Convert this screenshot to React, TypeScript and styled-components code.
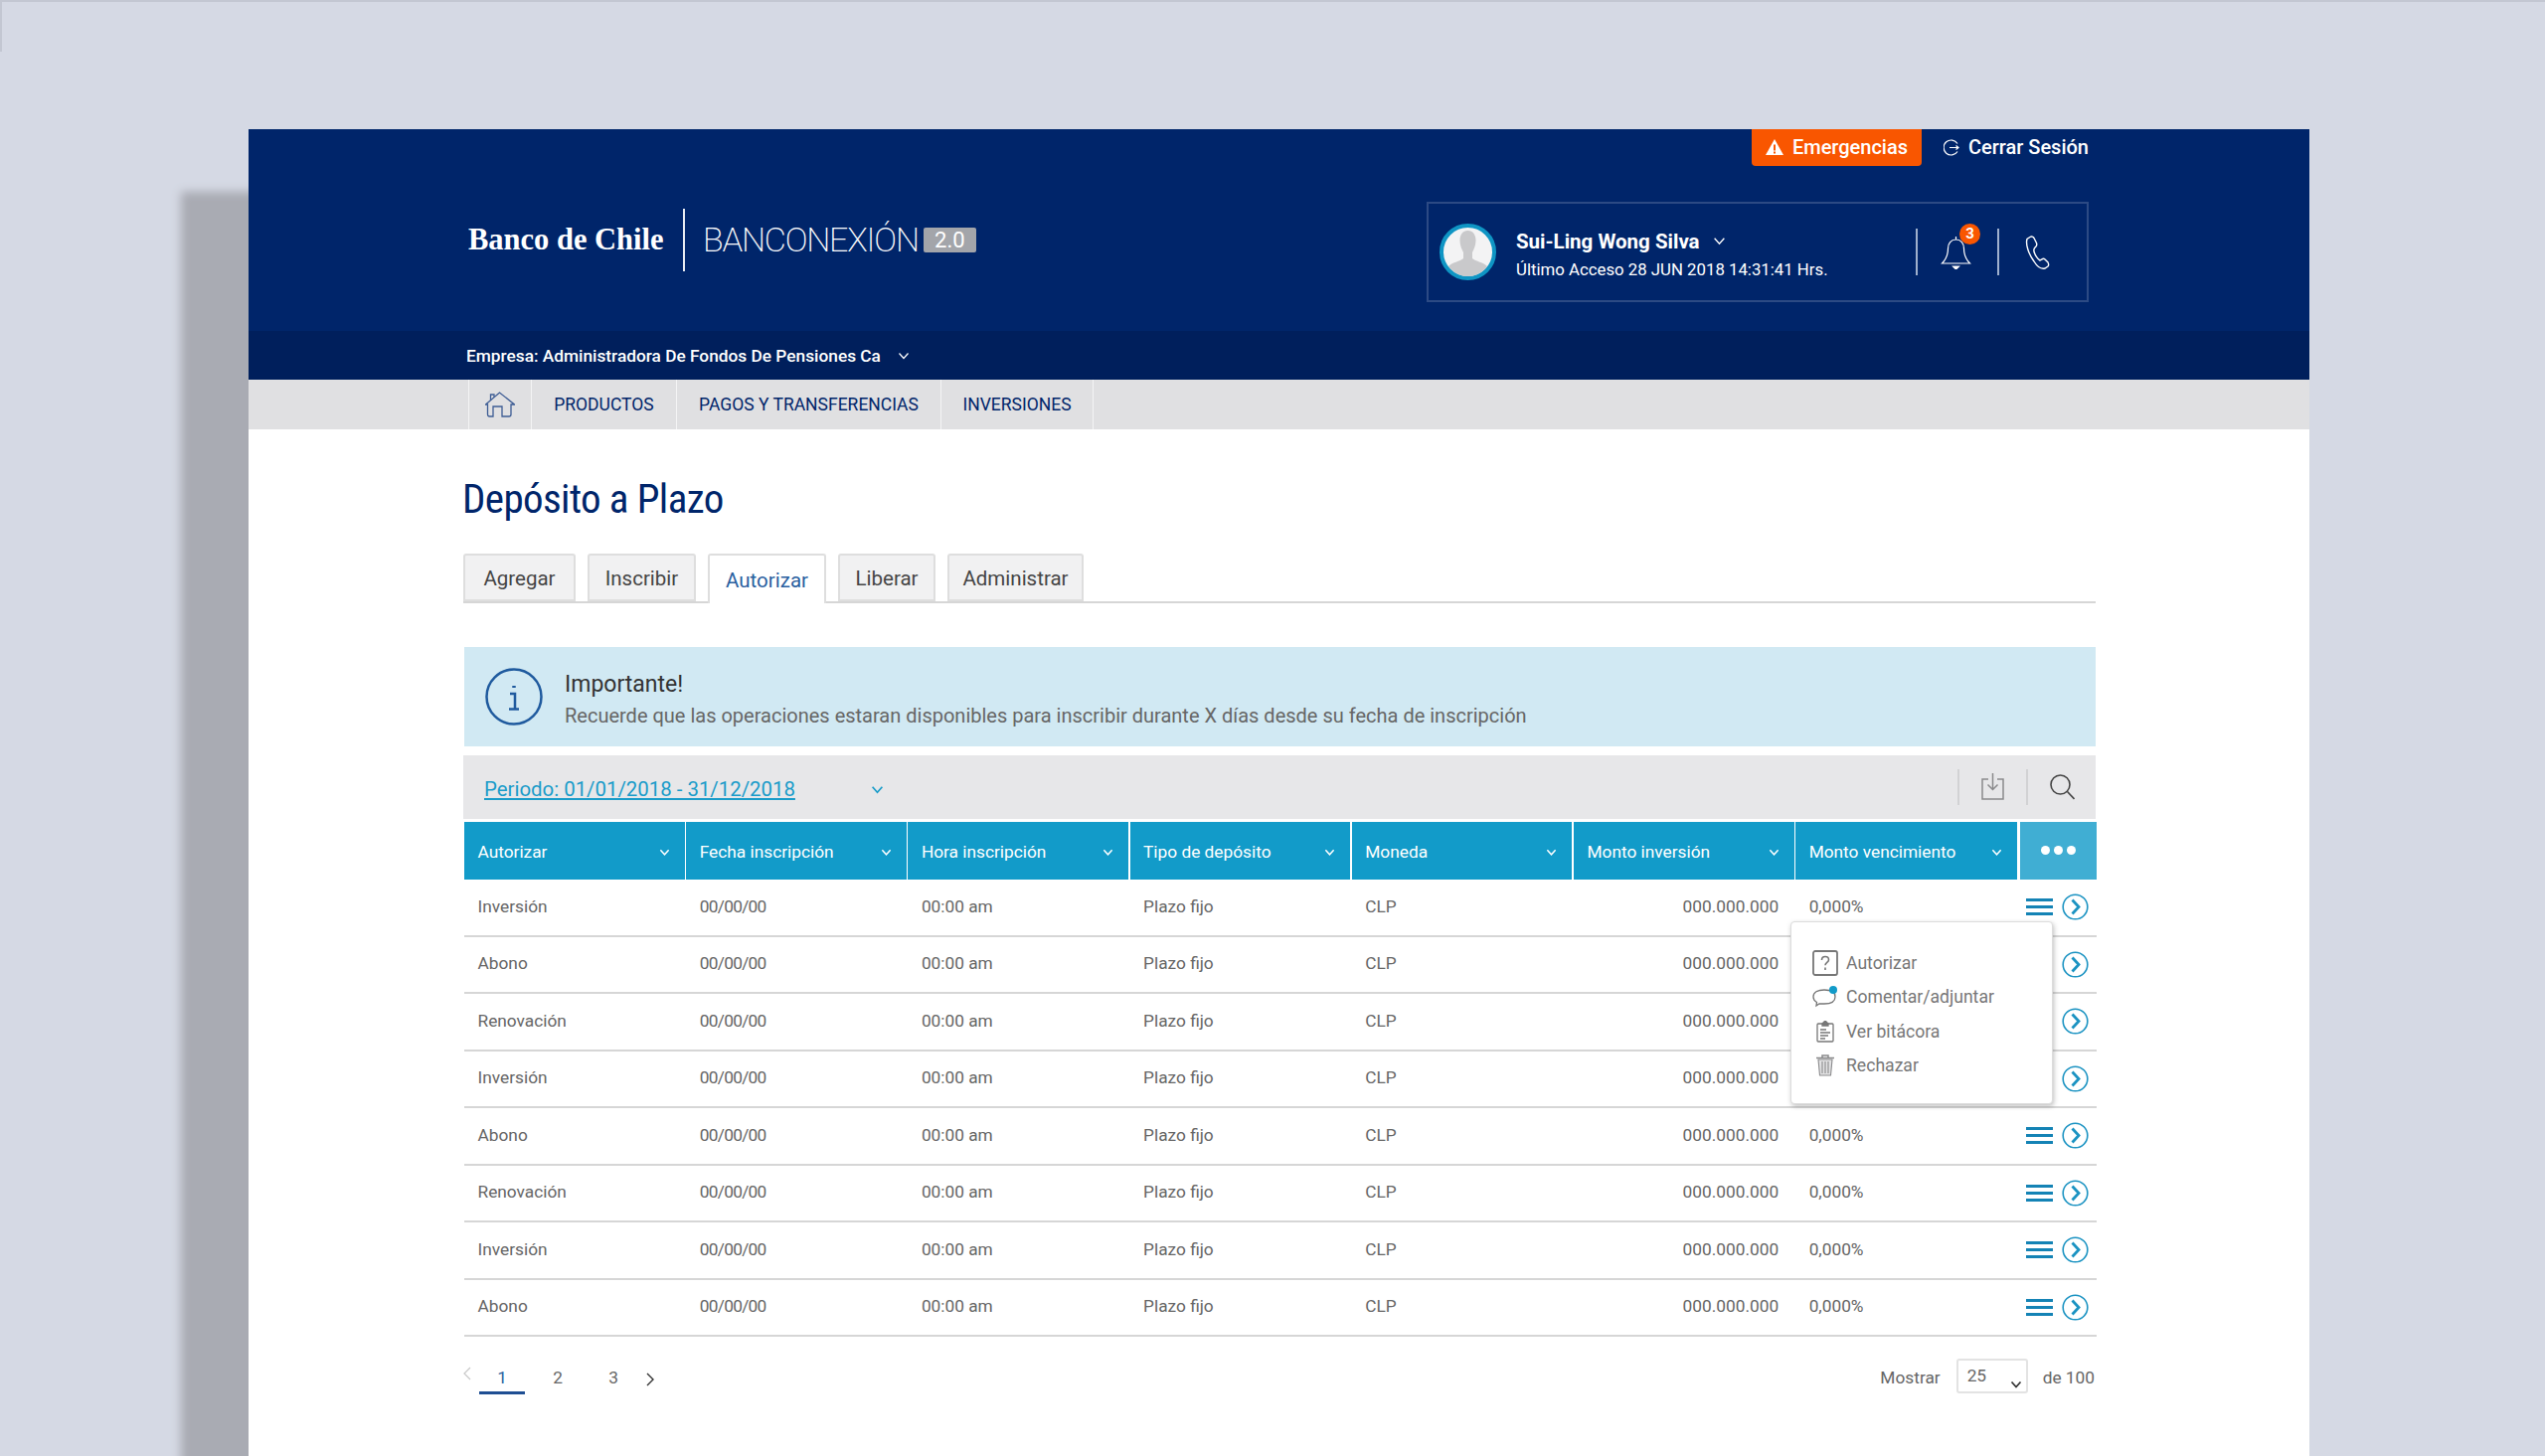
import React from 'react';
import styled, { createGlobalStyle } from 'styled-components';

const GlobalStyle = createGlobalStyle`
  html, body {
    margin: 0;
    padding: 0;
    background: #d5d9e4;
    font-family: Roboto, "Liberation Sans", sans-serif;
  }
  * { box-sizing: border-box; }
`;

const Page = styled.div`
  position: relative;
  width: 2560px;
  height: 1465px;
  overflow: hidden;
  padding: 130px 237px 0 250px;
  background: #d5d9e4;
  border-top: 2px solid #c3c7d2;

  &::before {
    content: '';
    position: absolute;
    left: 0;
    top: 0;
    width: 2px;
    height: 50px;
    background: #c3c7d2;
  }
`;

const Panel = styled.div`
  margin-top: -2px;
  height: 1400px;
  background: #fff;
  box-shadow: -68px 63px 9px 0 #a9abb3;
`;

const Header = styled.header`
  height: 203px;
  background: #00256a;
`;

const TopLinks = styled.div`
  display: flex;
  justify-content: flex-end;
  align-items: center;
  gap: 22px;
  height: 37px;
  padding-right: 222px;
`;

const EmergencyButton = styled.a`
  display: flex;
  align-items: center;
  gap: 9px;
  width: 171px;
  height: 37px;
  padding: 0 0 1px 14px;
  background: #f95600;
  border-radius: 0 0 4px 4px;
  color: #fff;
  font-size: 20px;
  font-weight: 500;
`;

const LogoutLink = styled.a`
  display: flex;
  align-items: center;
  gap: 8px;
  padding-bottom: 1px;
  color: #fff;
  font-size: 20px;
  font-weight: 500;
`;

const HeaderMain = styled.div`
  display: flex;
  justify-content: space-between;
  align-items: flex-start;
  padding: 0 222px 0 221px;
`;

const Logo = styled.div`
  display: flex;
  align-items: center;
  height: 63px;
  margin-top: 43px;
  color: #fff;
`;

const BankName = styled.span`
  width: 196px;
  font-family: "Liberation Serif", serif;
  font-size: 30.5px;
  font-weight: 700;
  white-space: nowrap;
`;

const LogoDivider = styled.span`
  width: 2px;
  height: 63px;
  margin: 0 18px 0 20px;
  background: #e8ebf2;
`;

const ProductName = styled.span`
  padding-bottom: 2px;
  font-size: 34px;
  font-weight: 200;
  letter-spacing: -1.2px;
  white-space: nowrap;
`;

const VersionBadge = styled.span`
  display: flex;
  align-items: center;
  justify-content: center;
  width: 53px;
  height: 25px;
  margin: 0 0 0 5px;
  border-radius: 2px;
  background: #a3a5aa;
  font-size: 22px;
  font-weight: 400;
`;

const UserBox = styled.div`
  display: flex;
  align-items: center;
  width: 666px;
  height: 101px;
  margin-top: 36px;
  padding: 0 37px 0 11px;
  border: 2px solid #2c4a84;
  color: #fff;
`;

const Avatar = styled.div`
  width: 57px;
  height: 57px;
  border: 4px solid #0f95c4;
  border-radius: 50%;
  overflow: hidden;
  background: #f3f3f4;
`;

const UserText = styled.div`
  display: flex;
  flex-direction: column;
  gap: 6px;
  margin: 4px 0 0 20px;
`;

const UserName = styled.div`
  display: flex;
  align-items: center;
  gap: 13px;
  font-size: 20.5px;
  font-weight: 700;
  line-height: 24px;
`;

const LastAccess = styled.div`
  font-size: 16.8px;
  line-height: 20px;
`;

const UserActions = styled.div`
  display: flex;
  align-items: center;
  gap: 26px;
  margin-left: auto;
`;

const ActionDivider = styled.span`
  width: 2px;
  height: 47px;
  background: #9fb0cd;
`;

const BellWrap = styled.div`
  position: relative;
  display: flex;
  margin-left: -3px;
`;

const BellBadge = styled.span`
  position: absolute;
  right: -9px;
  top: -12px;
  width: 21px;
  height: 21px;
  border-radius: 50%;
  background: #f95600;
  color: #fff;
  font-size: 15px;
  font-weight: 700;
  line-height: 21px;
  text-align: center;
`;

const CompanyBar = styled.div`
  display: flex;
  align-items: center;
  gap: 17px;
  height: 49px;
  padding-left: 219px;
  background: #001f5c;
  color: #fff;
  font-size: 17.3px;
  font-weight: 500;
`;

const Nav = styled.nav`
  display: flex;
  height: 50px;
  padding-left: 221px;
  background: #e0e0e2;
`;

const NavItem = styled.a<{ $width: number }>`
  display: flex;
  align-items: center;
  justify-content: center;
  width: ${(p) => p.$width}px;
  border-left: 1px solid #f4f4f5;
  color: #00256a;
  font-size: 17.5px;
  font-weight: 400;

  &:last-child {
    border-right: 1px solid #f4f4f5;
  }
`;

const Content = styled.main`
  width: 1858px;
  padding: 46px 0 0 216px;
`;

const Title = styled.h1`
  margin: 0 0 31px -1px;
  color: #00256a;
  font-size: 41px;
  font-weight: 400;
  line-height: 48px;
  font-stretch: 75%;
  letter-spacing: -0.6px;
`;

const Tabs = styled.div`
  display: flex;
  gap: 12px;
  height: 50px;
  border-bottom: 2px solid #d6d6d6;
`;

const Tab = styled.a<{ $width: number; $active?: boolean }>`
  display: flex;
  align-items: center;
  justify-content: center;
  width: ${(p) => p.$width}px;
  height: ${(p) => (p.$active ? 50 : 48)}px;
  padding-top: ${(p) => (p.$active ? 2 : 1)}px;
  border: 2px solid #dedede;
  border-bottom-width: ${(p) => (p.$active ? 0 : 2)}px;
  border-radius: 3px 3px 0 0;
  background: ${(p) => (p.$active ? '#fff' : '#f1f1f2')};
  color: ${(p) => (p.$active ? '#2a5f9f' : '#454545')};
  font-size: 20.5px;
`;

const InfoBar = styled.div`
  display: flex;
  align-items: center;
  gap: 22px;
  height: 100px;
  margin: 44px 0 0 1px;
  padding-left: 21px;
  background: #d1e9f3;
`;

const InfoIconBox = styled.span`
  display: flex;
  margin-top: -1px;
`;

const InfoBody = styled.div`
  padding-top: 4px;
`;

const InfoTitle = styled.div`
  color: #333;
  font-size: 23px;
  line-height: 28px;
`;

const InfoText = styled.div`
  margin-top: 5px;
  color: #666;
  font-size: 20px;
  line-height: 24px;
`;

const Toolbar = styled.div`
  display: flex;
  align-items: center;
  gap: 22px;
  height: 64px;
  margin-top: 9px;
  padding: 0 21px;
  background: #e7e7e9;
`;

const PeriodLink = styled.a`
  display: flex;
  align-items: center;
  gap: 76px;
  margin-right: auto;
  padding-top: 4px;
  color: #1a9cc9;
  font-size: 20.4px;
`;

const PeriodText = styled.span`
  text-decoration: underline;
`;

const ToolDivider = styled.span`
  width: 2px;
  height: 36px;
  background: #d2d2d4;
`;

const ToolIcon = styled.span`
  display: flex;
  margin-top: -1px;
`;

const Table = styled.div`
  position: relative;
  margin: 3px -1px 0 1px;
`;

const columns = 'repeat(6, 223.2px) 224px 79px';

const HeadRow = styled.div`
  display: grid;
  grid-template-columns: ${columns};
  height: 58px;
`;

const HeadCell = styled.div`
  display: flex;
  align-items: center;
  justify-content: space-between;
  margin-right: 1.5px;
  padding: 2px 15px 0 13.5px;
  background: #129bc9;
  color: #fff;
  font-size: 17.3px;
`;

const MoreCell = styled.div`
  display: flex;
  align-items: center;
  justify-content: center;
  gap: 4px;
  margin-left: 2px;
  padding-bottom: 2px;
  background: #40aed3;
`;

const Dot = styled.span`
  width: 9px;
  height: 9px;
  border-radius: 50%;
  background: #fff;
`;

const Row = styled.div`
  display: grid;
  grid-template-columns: ${columns};
  align-items: center;
  height: 57.5px;
  border-bottom: 2px solid #d6d6d6;
  color: #666;
  font-size: 17.3px;
`;

const Cell = styled.div<{ $right?: boolean; $tight?: boolean }>`
  padding: 0 ${(p) => (p.$right ? 17 : 14)}px 2px 13.5px;
  text-align: ${(p) => (p.$right ? 'right' : 'left')};
  letter-spacing: ${(p) => (p.$tight ? '-0.7px' : 'normal')};
`;

const RowActions = styled.div`
  display: flex;
  align-items: center;
  gap: 9px;
  padding-left: 8px;
`;

const Burger = styled.span`
  display: flex;
  flex-direction: column;
  gap: 4px;
  width: 27px;
`;

const BurgerLine = styled.span`
  height: 3px;
  background: #1483b5;
`;

const ActionMenu = styled.div`
  position: absolute;
  left: 1334px;
  top: 100px;
  display: flex;
  flex-direction: column;
  justify-content: center;
  width: 264px;
  height: 184px;
  padding: 3px 0 0 20px;
  background: #fff;
  border: 1px solid #dcdcdc;
  border-radius: 4px;
  box-shadow: 1px 2px 5px rgba(0, 0, 0, 0.25);
  color: #777;
  font-size: 17.6px;
`;

const MenuItem = styled.div`
  display: flex;
  align-items: center;
  height: 34.5px;
`;

const MenuIcon = styled.span`
  display: flex;
  justify-content: center;
  width: 28px;
  margin-right: 7px;
`;

const Footer = styled.div`
  display: flex;
  justify-content: space-between;
  align-items: center;
  margin-top: 21px;
  color: #666;
  font-size: 17.3px;
`;

const Pager = styled.div`
  display: flex;
  align-items: flex-start;
  height: 37px;
`;

const PagerArrow = styled.span<{ $top: number; $left: number }>`
  display: flex;
  margin: ${(p) => p.$top}px 0 0 ${(p) => p.$left}px;
`;

const PageNumber = styled.a<{ $active?: boolean }>`
  display: flex;
  justify-content: center;
  width: 46px;
  height: 37px;
  margin-right: 10px;
  padding-top: 10px;
  border-bottom: 3px solid ${(p) => (p.$active ? '#1e4e93' : 'transparent')};
  color: ${(p) => (p.$active ? '#2a5f9f' : '#666')};
`;

const PageSize = styled.div`
  display: flex;
  align-items: center;
  gap: 16px;
  margin-right: 1px;
  padding-top: 2px;
`;

const SizeSelect = styled.div`
  display: flex;
  justify-content: space-between;
  width: 72px;
  height: 35px;
  margin: -2px -1px 0 0;
  padding: 0 4px 0 9px;
  border: 2px solid #e3e3e3;
  border-radius: 3px;
  line-height: 30px;
`;

const SizeArrow = styled.span`
  display: flex;
  align-self: flex-end;
  margin-bottom: 1px;
`;

const Chevron = ({ size = 12, color = '#fff', width = 1.5 }: { size?: number; color?: string; width?: number }) => (
  <svg width={size} height={size} viewBox="0 0 12 12" fill="none" stroke={color} strokeWidth={width}>
    <path d="M1.5 3.5 6 8.5l4.5-5" />
  </svg>
);

const HomeIcon = () => (
  <svg width="30" height="26" viewBox="0 0 30 26" fill="none" stroke="#3d5c94" strokeWidth="1.3">
    <path d="M.5 13 14.500 1 29.500 13H26v10q0 2-2 2h-7V15H8v10H4.500q-2 0-2-2V13z" />
    <path d="M5.500 8.500V3H9v2.500" />
  </svg>
);

const WarningIcon = () => (
  <svg width="18" height="16" viewBox="0 0 18 16">
    <path d="M9 0 18 16H0z" fill="#fff" />
    <path d="M8 5.500h2v6H8zM8 12.500h2v2H8z" fill="#f95600" />
  </svg>
);

const LogoutIcon = () => (
  <svg width="17" height="17" viewBox="0 0 17 17" fill="none" stroke="#fff" strokeWidth="1.2">
    <path d="M14 4.500A7.500 7.500 0 1 0 14 12.500" />
    <path d="M6 8.500h9M12.500 6.500l2.500 2-2.500 2" />
  </svg>
);

const AvatarFigure = () => (
  <svg width="49" height="49" viewBox="0 0 49 49">
    <path d="M24.500 3c5 0 8 4 8 10 0 5-2 9-3.500 12v6c3 3 12 4 15 8l2 10H3l2-10c3-4 12-5 15-8v-6c-1.500-3-3.500-7-3.500-12 0-6 3-10 8-10z" fill="#c9c9cb" />
  </svg>
);

const BellIcon = () => (
  <svg width="31" height="34" viewBox="0 0 31 34" fill="none" stroke="#fff" strokeWidth="1.2">
    <path d="M15.500 1v3M15.500 4c-5 0-8 4-8 9 0 8-3 12-6 15h28c-3-3-6-7-6-15 0-5-3-9-8-9z" />
    <path d="M12.500 31h6l-3 3z" fill="#fff" />
  </svg>
);

const PhoneIcon = () => (
  <svg width="25" height="34" viewBox="0 0 25 34" fill="none" stroke="#fff" strokeWidth="1.4">
    <path d="M5 1.500 2 3.500C.500 8 3 18 9 26c3 5 7 8 11 7l3-2c1-1 1-2 0-4l-3-3c-1-1-2-1-3 0l-2 1c-2-1-5-5-6-9-.5-2 0-3 1-4l1-1c1-1 1-2 .5-3.500L9 2.500C8 1 6.500 .500 5 1.500z" />
  </svg>
);

const InfoIcon = () => (
  <svg width="58" height="58" viewBox="0 0 58 58" fill="none" stroke="#1f5a9e">
    <circle cx="29" cy="29" r="27.500" strokeWidth="2.500" />
    <path d="M29 18v2" strokeWidth="3.500" />
    <path d="M25 26h5v15M24 41.500h10" strokeWidth="2.500" />
  </svg>
);

const DownloadIcon = () => (
  <svg width="23" height="27" viewBox="0 0 23 27" fill="none" stroke="#8a8a8c" strokeWidth="1.500">
    <path d="M7 6H1v20h21V6h-6" />
    <path d="M11.500 0v16M6.500 11.500l5 5 5-5" />
  </svg>
);

const SearchIcon = () => (
  <svg width="25" height="26" viewBox="0 0 25 26" fill="none" stroke="#444" strokeWidth="1.600">
    <circle cx="10.500" cy="10.500" r="9.500" />
    <path d="M17.500 17.500 24.500 25" />
  </svg>
);

const CircleArrow = () => (
  <svg width="27" height="27" viewBox="0 0 27 27" fill="none" stroke="#1b93c2">
    <circle cx="13.500" cy="13.500" r="12.300" strokeWidth="1.600" />
    <path d="M10.500 6.500 17 13.500l-6.500 7" strokeWidth="2.800" />
  </svg>
);

const QuestionIcon = () => (
  <svg width="26" height="26" viewBox="0 0 26 26" fill="none" stroke="#777" strokeWidth="1.800">
    <rect x="1" y="1" width="24" height="24" rx="2" />
    <path d="M9.500 10c0-2 1.500-3.500 3.500-3.500s3.500 1.300 3.500 3.200c0 2.600-3.500 2.800-3.500 5.500M13 17.500v2.500" strokeWidth="1.600" />
  </svg>
);

const CommentIcon = () => (
  <svg width="26" height="22" viewBox="0 0 26 22" fill="none">
    <path d="M12 4c6 0 11 2 11 7s-5 7-11 7H7l-3 2 .5-3.500C2 15 1 13 1 11c0-5 5-7 11-7z" stroke="#777" strokeWidth="1.300" />
    <circle cx="21" cy="4" r="4" fill="#129bc9" />
  </svg>
);

const ClipboardIcon = () => (
  <svg width="18" height="22" viewBox="0 0 18 22" fill="none" stroke="#777" strokeWidth="1.300">
    <rect x="1" y="3" width="16" height="18" rx="1" />
    <path d="M6 3l3-3 3 3v2H6z" fill="#777" />
    <path d="M4 9h6M4 12h10M4 15h8M4 18h5" />
  </svg>
);

const TrashIcon = () => (
  <svg width="18" height="22" viewBox="0 0 18 22" fill="none" stroke="#8a8a8c" strokeWidth="1.100">
    <path d="M0 3.500h18M6 3V1h6v2" strokeWidth="1.500" />
    <path d="M2 5l1.500 16h11L16 5z" fill="#e2e2e3" />
    <path d="M6 7v12M9 7v12M12 7v12" />
  </svg>
);

const headers = ['Autorizar', 'Fecha inscripción', 'Hora inscripción', 'Tipo de depósito', 'Moneda', 'Monto inversión', 'Monto vencimiento'];
const rows = ['Inversión', 'Abono', 'Renovación', 'Inversión', 'Abono', 'Renovación', 'Inversión', 'Abono'];
// the open menu hangs over these rows, their rate is not visible
const coveredRows = [1, 2, 3];

const App = () => (
  <Page>
    <GlobalStyle />
    <Panel>
      <Header>
        <TopLinks>
          <EmergencyButton><WarningIcon />Emergencias</EmergencyButton>
          <LogoutLink><LogoutIcon />Cerrar Sesión</LogoutLink>
        </TopLinks>
        <HeaderMain>
          <Logo>
            <BankName>Banco de Chile</BankName>
            <LogoDivider />
            <ProductName>BANCONEXIÓN</ProductName>
            <VersionBadge>2.0</VersionBadge>
          </Logo>
          <UserBox>
            <Avatar><AvatarFigure /></Avatar>
            <UserText>
              <UserName>Sui-Ling Wong Silva <Chevron size={13} width={1.2} /></UserName>
              <LastAccess>Último Acceso 28 JUN 2018 14:31:41 Hrs.</LastAccess>
            </UserText>
            <UserActions>
              <ActionDivider />
              <BellWrap>
                <BellIcon />
                <BellBadge>3</BellBadge>
              </BellWrap>
              <ActionDivider />
              <PhoneIcon />
            </UserActions>
          </UserBox>
        </HeaderMain>
      </Header>
      <CompanyBar>
        Empresa: Administradora De Fondos De Pensiones Ca
        <Chevron size={12} width={1.2} />
      </CompanyBar>
      <Nav>
        <NavItem $width={63}><HomeIcon /></NavItem>
        <NavItem $width={146}>PRODUCTOS</NavItem>
        <NavItem $width={266}>PAGOS Y TRANSFERENCIAS</NavItem>
        <NavItem $width={154}>INVERSIONES</NavItem>
      </Nav>
      <Content>
        <Title>Depósito a Plazo</Title>
        <Tabs>
          <Tab $width={113}>Agregar</Tab>
          <Tab $width={109}>Inscribir</Tab>
          <Tab $width={119} $active>Autorizar</Tab>
          <Tab $width={98}>Liberar</Tab>
          <Tab $width={137}>Administrar</Tab>
        </Tabs>
        <InfoBar>
          <InfoIconBox><InfoIcon /></InfoIconBox>
          <InfoBody>
            <InfoTitle>Importante!</InfoTitle>
            <InfoText>Recuerde que las operaciones estaran disponibles para inscribir durante X días desde su fecha de inscripción</InfoText>
          </InfoBody>
        </InfoBar>
        <Toolbar>
          <PeriodLink>
            <PeriodText>Periodo: 01/01/2018 - 31/12/2018</PeriodText>
            <Chevron size={13} color="#1a9cc9" width={1.6} />
          </PeriodLink>
          <ToolDivider />
          <ToolIcon><DownloadIcon /></ToolIcon>
          <ToolDivider />
          <ToolIcon><SearchIcon /></ToolIcon>
        </Toolbar>
        <Table>
          <HeadRow>
            {headers.map((h) => (
              <HeadCell key={h}>{h}<Chevron size={11} width={1.6} /></HeadCell>
            ))}
            <MoreCell><Dot /><Dot /><Dot /></MoreCell>
          </HeadRow>
          {rows.map((type, i) => (
            <Row key={i}>
              <Cell>{type}</Cell>
              <Cell $tight>00/00/00</Cell>
              <Cell>00:00 am</Cell>
              <Cell>Plazo fijo</Cell>
              <Cell>CLP</Cell>
              <Cell $right>000.000.000</Cell>
              <Cell>{coveredRows.includes(i) ? '' : '0,000%'}</Cell>
              <RowActions>
                <Burger><BurgerLine /><BurgerLine /><BurgerLine /></Burger>
                <CircleArrow />
              </RowActions>
            </Row>
          ))}
          <ActionMenu>
            <MenuItem><MenuIcon><QuestionIcon /></MenuIcon>Autorizar</MenuItem>
            <MenuItem><MenuIcon><CommentIcon /></MenuIcon>Comentar/adjuntar</MenuItem>
            <MenuItem><MenuIcon><ClipboardIcon /></MenuIcon>Ver bitácora</MenuItem>
            <MenuItem><MenuIcon><TrashIcon /></MenuIcon>Rechazar</MenuItem>
          </ActionMenu>
        </Table>
        <Footer>
          <Pager>
            <PagerArrow $top={9} $left={0}>
              <svg width="8" height="14" viewBox="0 0 8 14" fill="none" stroke="#c8c8c8" strokeWidth="1.200"><path d="M7 1 1 7l6 6" /></svg>
            </PagerArrow>
            <PagerArrow $top={0} $left={8} />
            <PageNumber $active>1</PageNumber>
            <PageNumber>2</PageNumber>
            <PageNumber>3</PageNumber>
            <PagerArrow $top={15} $left={0}>
              <svg width="8" height="14" viewBox="0 0 8 14" fill="none" stroke="#333" strokeWidth="1.400"><path d="m1 1 6 6-6 6" /></svg>
            </PagerArrow>
          </Pager>
          <PageSize>
            <span>Mostrar</span>
            <SizeSelect>
              25
              <SizeArrow><Chevron size={12} color="#333" width={1.7} /></SizeArrow>
            </SizeSelect>
            <span>de 100</span>
          </PageSize>
        </Footer>
      </Content>
    </Panel>
  </Page>
);

export default App;
